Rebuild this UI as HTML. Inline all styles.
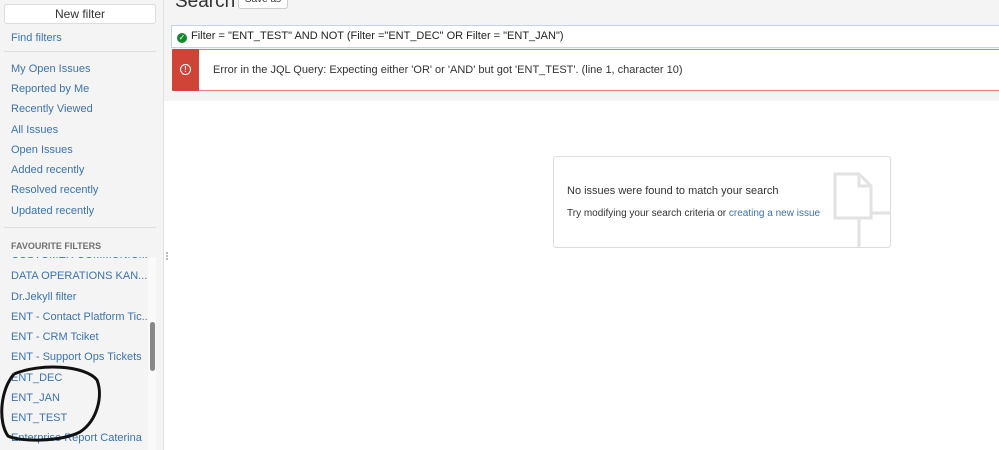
<!DOCTYPE html>
<html><head><style>
body{margin:0;width:999px;height:450px;overflow:hidden;font-family:"Liberation Sans",Arial,sans-serif;background:#fff;position:relative}
.side{position:absolute;left:0;top:0;width:163px;height:450px;background:#f4f4f4;border-right:1px solid #e2e2e2}
.btn{position:absolute;left:4px;top:4px;width:150px;height:18px;background:#fff;border:1px solid #ddd;border-radius:3px;font-size:12px;text-align:center;line-height:18px;color:#333}
.a{position:absolute;left:11px;font-size:11px;color:#3b73af;white-space:nowrap}
.hr{position:absolute;left:4px;width:152px;height:1px;background:#ddd}
.fav{position:absolute;left:11px;top:241px;font-size:9px;font-weight:bold;color:#707070}
.main{position:absolute;left:164px;top:0;width:835px;height:101px;background:#f4f4f4}
</style></head><body>
<div class="side">
<div class="btn">New filter</div>
<div class="a" style="top:32px">Find filters</div>
<div class="hr" style="top:51px"></div>
<div class="a" style="top:63px">My Open Issues</div>
<div class="a" style="top:83px">Reported by Me</div>
<div class="a" style="top:103px">Recently Viewed</div>
<div class="a" style="top:124px">All Issues</div>
<div class="a" style="top:144px">Open Issues</div>
<div class="a" style="top:164px">Added recently</div>
<div class="a" style="top:184px">Resolved recently</div>
<div class="a" style="top:205px">Updated recently</div>
<div class="hr" style="top:227px;width:152px"></div>
<div class="fav">FAVOURITE FILTERS</div>
<div style="position:absolute;left:0;top:257px;width:147px;height:193px;overflow:hidden">
<div class="a" style="top:-8px">CUSTOMER COMMUNIC...</div>
<div class="a" style="top:13px">DATA OPERATIONS KAN...</div>
<div class="a" style="top:34px">Dr.Jekyll filter</div>
<div class="a" style="top:54px">ENT - Contact Platform Tic...</div>
<div class="a" style="top:74px">ENT - CRM Tciket</div>
<div class="a" style="top:94px">ENT - Support Ops Tickets</div>
<div class="a" style="top:115px">ENT_DEC</div>
<div class="a" style="top:135px">ENT_JAN</div>
<div class="a" style="top:155px">ENT_TEST</div>
<div class="a" style="top:175px">Enterprise Report Caterina</div>
</div>
<div style="position:absolute;left:148px;top:257px;width:8px;height:193px;background:#fafafa"></div>
<div style="position:absolute;left:150px;top:322px;width:5px;height:49px;background:#888;border-radius:3px"></div>
</div>
<div class="main">
<div style="position:absolute;left:11px;top:-9px;font-size:19px;color:#333">Search</div>
<div style="position:absolute;left:74px;top:-10px;width:48px;height:17px;background:#fff;border:1px solid #ccc;border-radius:3px;font-size:10px;text-align:center;line-height:18px;color:#333">Save as</div>
<div style="position:absolute;left:7px;top:25px;width:835px;height:21px;background:#fff;border:1px solid #c6d3e6;font-size:11px;line-height:21px;color:#222">
<span style="display:inline-block;width:10px;height:10px;border-radius:50%;background:#14892c;margin:0 4px 0 5px;vertical-align:-1px;color:#fff;font-size:8px;line-height:10px;text-align:center">✓</span>Filter = "ENT_TEST" AND NOT (Filter ="ENT_DEC" OR Filter = "ENT_JAN")</div>
<div style="position:absolute;left:8px;top:49px;width:835px;height:40px;background:#fff;border-top:1px solid #e87b76;border-bottom:1px solid #e87b76">
<div style="position:absolute;left:0;top:-1px;width:27px;height:42px;background:#d04437;border-radius:2px 0 0 2px"></div>
<div style="position:absolute;left:8px;top:14px;width:9px;height:9px;border:1.5px solid #fff;border-radius:50%;color:#fff;font-size:8px;line-height:9px;text-align:center;font-weight:bold">!</div>
<div style="position:absolute;left:41px;top:14px;font-size:11px;color:#333">Error in the JQL Query: Expecting either 'OR' or 'AND' but got 'ENT_TEST'. (line 1, character 10)</div>
</div>
</div>
<div style="position:absolute;left:166px;top:252px;width:2px;height:8px;border-left:2px dotted #bbb"></div>
<div style="position:absolute;left:553px;top:156px;width:336px;height:90px;border:1px solid #ddd;border-radius:3px;overflow:hidden">
<div style="position:absolute;left:13px;top:28px;font-size:11px;color:#333">No issues were found to match your search</div>
<div style="position:absolute;left:13px;top:51px;font-size:10px;color:#333">Try modifying your search criteria or <span style="color:#3b73af">creating a new issue</span></div>
<svg style="position:absolute;left:278px;top:14px" width="60" height="80"><path d="M3 3 H27 L39 15 V47 H3 Z M27 3 V15 H39" fill="none" stroke="#e2e2e2" stroke-width="3"/><path d="M27 47 V80 M39 42 H58" fill="none" stroke="#e2e2e2" stroke-width="3"/></svg>
</div>
<svg style="position:absolute;left:0;top:360px" width="110" height="90"><path d="M14 14 C40 3 85 5 97 20 C103 35 98 60 80 72 C60 82 20 82 8 76 C-2 62 0 30 14 14" fill="none" stroke="#111" stroke-width="3"/></svg>
</body></html>
